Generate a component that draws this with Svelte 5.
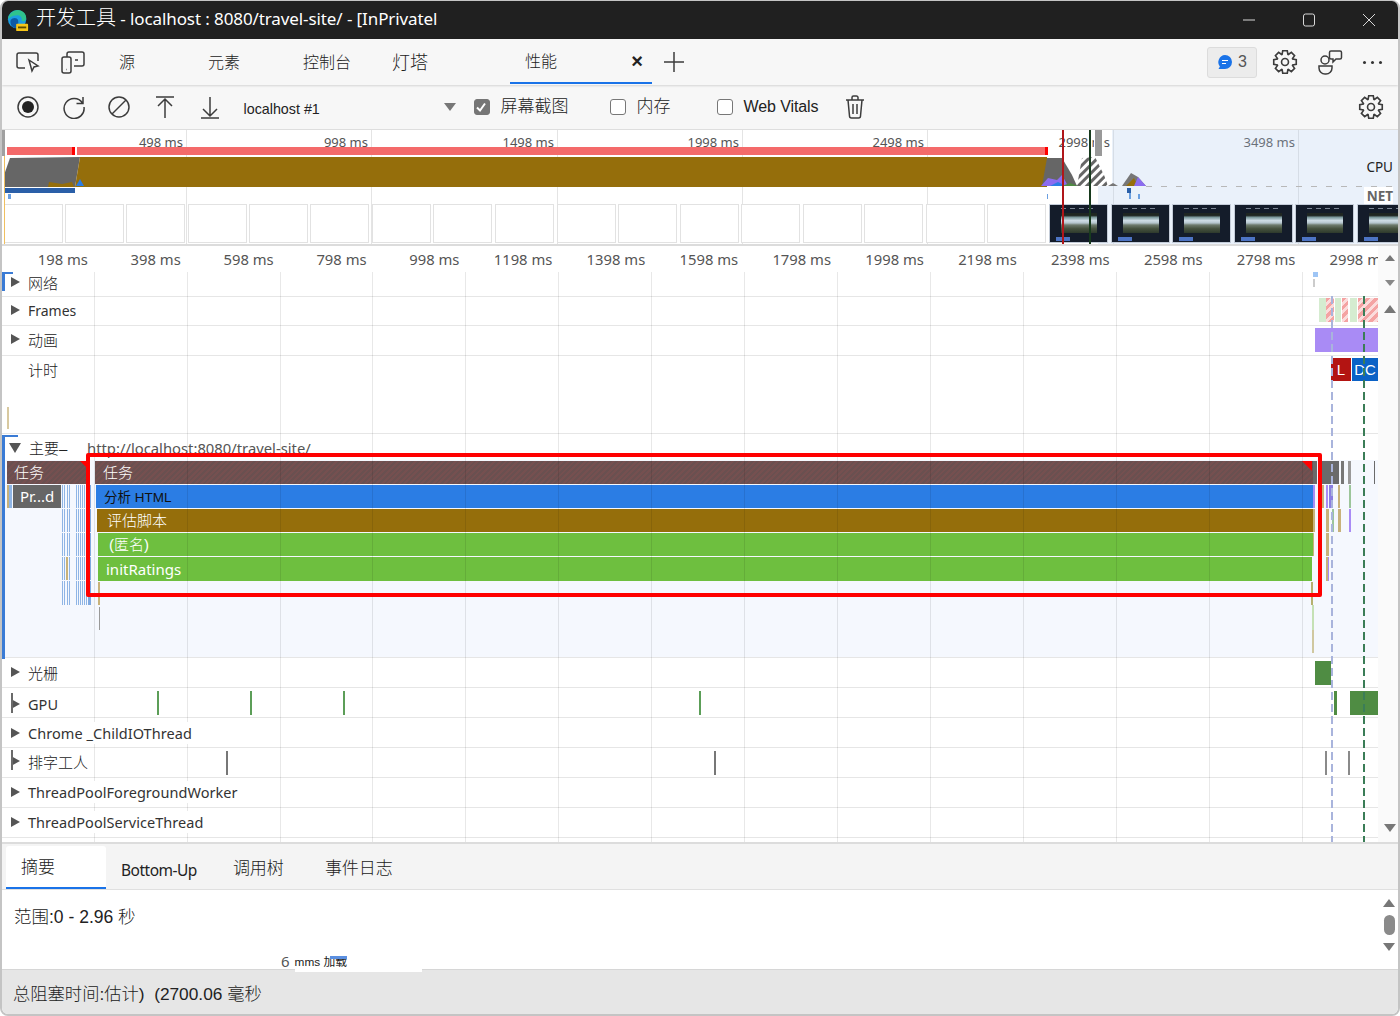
<script>
  // timeline is a free canvas, so events are plain data in page x and row-local y
  const X0 = 2
  const gridLines = [94, 187, 280, 372, 465, 558, 651, 744, 837, 930, 1023, 1116, 1209, 1302]
  const rulerLabels = ['198 ms', '398 ms', '598 ms', '798 ms', '998 ms', '1198 ms', '1398 ms', '1598 ms', '1798 ms', '1998 ms', '2198 ms', '2398 ms', '2598 ms', '2798 ms', '2998 ms']
  const overviewTicks = [
    ['498 ms', 186], ['998 ms', 371], ['1498 ms', 557], ['1998 ms', 742],
    ['2498 ms', 927], ['2998 ms', 1113], ['3498 ms', 1298]
  ]
  const blankFrames = [4, 65, 126, 188, 249, 310, 372, 433, 495, 557, 618, 680, 741, 803, 864, 926, 987]
  const shotFrames = [1049, 1111, 1172, 1234, 1295, 1357]

  const TAN = '#c8b27a'
  const PURPLE = '#a98bf5'
  const GREY = '#6a6a6a'
  const STRIPE = '#8fb5e5'

  const rows = [
    { key: 'net', label: '网络', arrow: true, h: 24, ly: -1, events: [
      { x: 1313, w: 5, y: 0, h: 5, c: '#9ec5f5' },
      { x: 1313, w: 2, y: 7, h: 8, c: '#cccccc' }
    ] },
    { key: 'frames', label: 'Frames', arrow: true, latin: true, h: 29, ly: 3, events: [
      { x: 1319, w: 7, y: 2, h: 24, c: '#d5ecd0' },
      { x: 1326, w: 8, y: 2, h: 24, hatch: true },
      { x: 1335, w: 6, y: 2, h: 24, c: '#d5ecd0' },
      { x: 1342, w: 6, y: 2, h: 24, hatch: true },
      { x: 1350, w: 7, y: 2, h: 24, c: '#d5ecd0' },
      { x: 1358, w: 20, y: 2, h: 24, hatch: true }
    ] },
    { key: 'anim', label: '动画', arrow: true, h: 30, ly: 3, events: [
      { x: 1315, w: 63, y: 3, h: 24, c: PURPLE }
    ] },
    { key: 'timing', label: '计时', h: 78, ly: 3, events: [
      { x: 1331, w: 20, y: 3, h: 23, c: '#b31412', text: 'L' },
      { x: 1352, w: 26, y: 3, h: 23, c: '#0b62c6', text: 'DC' },
      { x: 7, w: 2, y: 52, h: 22, c: '#d8c9a0' }
    ] }
  ]

  const lowerRows = [
    { label: '光栅', arrow: true, ly: 4, events: [{ x: 1315, w: 16, y: 4, h: 24, c: '#4f8c43' }] },
    { label: 'GPU', arrow: true, latin: true, mark: true, ly: 6, events: [
      { x: 157, w: 2, y: 4, h: 24, c: '#5c9e58' }, { x: 250, w: 2, y: 4, h: 24, c: '#5c9e58' },
      { x: 343, w: 2, y: 4, h: 24, c: '#5c9e58' }, { x: 699, w: 2, y: 4, h: 24, c: '#5c9e58' },
      { x: 1334, w: 3, y: 4, h: 24, c: '#4f8c43' }, { x: 1350, w: 28, y: 4, h: 24, c: '#4f8c43' }
    ] },
    { label: 'Chrome _ChildIOThread', arrow: true, latin: true, ly: 5, events: [] },
    { label: '排字工人', arrow: true, mark: true, ly: 3, events: [
      { x: 226, w: 2, y: 4, h: 24, c: '#777777' }, { x: 714, w: 2, y: 4, h: 24, c: '#777777' },
      { x: 1325, w: 2, y: 4, h: 24, c: '#8a8a8a' }, { x: 1348, w: 2, y: 4, h: 24, c: '#8a8a8a' }
    ] },
    { label: 'ThreadPoolForegroundWorker', arrow: true, latin: true, ly: 4, events: [] },
    { label: 'ThreadPoolServiceThread', arrow: true, latin: true, ly: 4, events: [] }
  ]

  // flame chart, y relative to the top of the main track (433)
  const flame = [
    { x: 7, w: 79, y: 28, h: 23, task: true, text: '任务', pad: 7 },
    { x: 95, w: 1218, y: 28, h: 23, task: true, text: '任务', pad: 8 },
    { x: 96, w: 1217, y: 52, h: 23, c: '#2b7de4', text: '分析 HTML', dark: true, pad: 8 },
    { x: 97, w: 1216, y: 76, h: 23, c: '#956e0b', text: '评估脚本', pad: 10 },
    { x: 98, w: 1215, y: 100, h: 23, c: '#6ebf3f', text: '(匿名)', pad: 11 },
    { x: 98, w: 1214, y: 124, h: 24, c: '#6ebf3f', text: 'initRatings', pad: 8, latin: true },
    { x: 13, w: 48, y: 52, h: 23, c: '#666666', text: 'Pr...d', pad: 7, latin: true },
    { x: 7, w: 2, y: 52, h: 23, c: TAN },
    { x: 9, w: 3, y: 52, h: 23, c: STRIPE },
    { x: 98, w: 2, y: 149, h: 23, c: TAN },
    { x: 99, w: 1, y: 174, h: 23, c: '#999999' },
    { x: 1313, w: 4, y: 28, h: 23, c: GREY },
    { x: 1322, w: 17, y: 28, h: 23, c: GREY },
    { x: 1341, w: 3, y: 28, h: 23, c: '#777777' },
    { x: 1348, w: 3, y: 28, h: 23, c: '#999999' },
    { x: 1374, w: 1, y: 28, h: 23, c: GREY },
    { x: 1313, w: 2, y: 52, h: 23, c: PURPLE },
    { x: 1322, w: 2, y: 52, h: 23, c: TAN },
    { x: 1326, w: 2, y: 52, h: 23, c: PURPLE },
    { x: 1329, w: 4, y: 52, h: 23, c: '#8b7fe0' },
    { x: 1338, w: 2, y: 52, h: 23, c: TAN },
    { x: 1349, w: 2, y: 52, h: 23, c: '#9cc59a' },
    { x: 1313, w: 2, y: 76, h: 23, c: TAN },
    { x: 1326, w: 3, y: 76, h: 23, c: TAN },
    { x: 1332, w: 2, y: 76, h: 23, c: '#9cc59a' },
    { x: 1338, w: 3, y: 76, h: 23, c: TAN },
    { x: 1349, w: 2, y: 76, h: 23, c: PURPLE },
    { x: 1313, w: 1, y: 100, h: 23, c: TAN },
    { x: 1326, w: 3, y: 100, h: 23, c: TAN },
    { x: 1326, w: 2, y: 124, h: 24, c: TAN },
    { x: 1328, w: 1, y: 124, h: 24, c: PURPLE },
    { x: 1311, w: 2, y: 149, h: 23, c: '#b6b070' },
    { x: 1312, w: 2, y: 172, h: 25, c: '#c5e1b5' },
    { x: 1312, w: 2, y: 197, h: 23, c: '#d0c8a0' }
  ]
  // thin blue columns left of the long task
  const stripeX = [62, 64, 67, 69, 76, 78, 80, 82, 84, 86, 88]
  for (const y of [52, 76, 100, 124, 148]) {
    for (const x of stripeX) {
      flame.push({ x, w: 1, y, h: y === 148 ? 24 : 23, c: x === 88 ? '#5f93d8' : STRIPE })
    }
    flame.push({ x: 88, w: 3, y, h: y === 148 ? 24 : 23, c: '#7fa9e0' })
  }
  flame.push({ x: 66, w: 2, y: 124, h: 23, c: TAN })

  const tasksRight = [80, 1302]

  // 8 tooth cog centred on 12,12, drawn as one closed outline
  function cog() {
    const pts = []
    for (let i = 0; i < 8; i++) {
      const a = (i * Math.PI) / 4
      for (const [r, off] of [[7.6, -0.36], [10.6, -0.2], [10.6, 0.2], [7.6, 0.36]]) {
        pts.push((12 + r * Math.sin(a + off)).toFixed(2) + ' ' + (12 - r * Math.cos(a + off)).toFixed(2))
      }
    }
    return 'M' + pts.join('L') + 'Z'
  }
  const cogPath = cog()
</script>

{#snippet gear()}
  <svg viewBox="0 0 24 24" width="26" height="26" class="ico">
    <path d={cogPath} />
    <circle cx="12" cy="12" r="3.2" />
  </svg>
{/snippet}

{#snippet eventBar(e)}
  <div
    class="ev"
    class:hatch={e.hatch}
    style="left:{e.x - X0}px;top:{e.y}px;width:{e.w}px;height:{e.h}px;background-color:{e.c}"
  >
    {#if e.text}<span>{e.text}</span>{/if}
  </div>
{/snippet}

<div class="win">
  <header class="title">
    <svg class="edge" viewBox="0 0 24 24" width="22" height="22">
      <circle cx="11" cy="10" r="10" fill="#1b9de2" />
      <path d="M1 10C2 3 8 0 12 0c5 0 9 4 9 9 0 3-3 4-5 3 1-4-2-7-6-6-4 0-7 2-9 4z" fill="#2fc28e" />
      <path d="M4 11c2-3 7-3 8 0 1 4 0 7-3 9-4-1-6-5-5-9z" fill="#0c59a4" />
      <rect x="10" y="15" width="13" height="8" rx="1" fill="#f5c518" />
      <rect x="12" y="18" width="9" height="2" fill="#5a4a00" />
    </svg>
    <span class="title-text"><span class="cjk-title">开发工具</span> - localhost : 8080/travel-site/ - [InPrivatel</span>
    <div class="win-btns">
      <svg viewBox="0 0 14 14" width="14" height="14"><path d="M1 7h12" /></svg>
      <svg viewBox="0 0 14 14" width="14" height="14"><rect x="1.5" y="1" width="11" height="12" rx="2" /></svg>
      <svg viewBox="0 0 14 14" width="14" height="14"><path d="M1 1l12 12M13 1L1 13" /></svg>
    </div>
  </header>

  <nav class="tabs">
    <svg class="ico tab-ico" viewBox="0 0 26 24" width="26" height="24">
      <path d="M10 18H4a2 2 0 0 1-2-2V5a2 2 0 0 1 2-2h17a2 2 0 0 1 2 2v6" />
      <path d="M14 10l9 6-4 1-2 4z" />
    </svg>
    <svg class="ico tab-ico two" viewBox="0 0 26 24" width="26" height="24">
      <rect x="2" y="7" width="9" height="16" rx="2" />
      <path d="M7 7V4a2 2 0 0 1 2-2h13a2 2 0 0 1 2 2v10a2 2 0 0 1-2 2h-8M6 19.500h.5M15 10h3" />
    </svg>
    <span class="tab t-src">源</span>
    <span class="tab t-el">元素</span>
    <span class="tab t-con">控制台</span>
    <span class="tab t-lh">灯塔</span>
    <div class="tab-active">
      <span class="tab">性能</span>
      <span class="close">×</span>
    </div>
    <svg class="ico plus" viewBox="0 0 24 24" width="24" height="24"><path d="M12 2v20M2 12h20" /></svg>
    <div class="spacer"></div>
    <div class="badge">
      <svg viewBox="0 0 16 16" width="16" height="16">
        <path d="M8 1a7 7 0 0 1 0 14H1.500l1.400-2.600A7 7 0 0 1 8 1z" fill="#1a73e8" />
        <path d="M5 6.500h6M5 9.500h4" stroke="#fff" stroke-width="1" />
      </svg>
      <span>3</span>
    </div>
    <div class="tab-gear">{@render gear()}</div>
    <svg class="ico feedback" viewBox="0 0 26 26" width="26" height="26">
      <circle cx="8" cy="11" r="4" />
      <path d="M2 17h13v2a6 6 0 0 1-6 6H8a6 6 0 0 1-6-6z" />
      <path d="M14 2h9a1.500 1.500 0 0 1 1.500 1.500v5A1.500 1.500 0 0 1 23 10h-4l-3 3v-3h-2a1.500 1.500 0 0 1-1.500-1.500v-5A1.500 1.500 0 0 1 14 2z" />
    </svg>
    <div class="dots"><i></i><i></i><i></i></div>
  </nav>

  <div class="toolbar">
    <svg class="ico tool" viewBox="0 0 24 24" width="24" height="24">
      <circle cx="12" cy="12" r="10" />
      <circle cx="12" cy="12" r="6" class="solid" />
    </svg>
    <svg class="ico tool" viewBox="0 0 24 24" width="24" height="24">
      <path d="M21 2v6.500h-6.500M20.500 8A10 10 0 1 0 22 12" />
    </svg>
    <svg class="ico tool" viewBox="0 0 24 24" width="24" height="24">
      <circle cx="12" cy="12" r="10" />
      <path d="M5 19L19 5" />
    </svg>
    <svg class="ico tool" viewBox="0 0 24 24" width="24" height="24">
      <path d="M3 2h18M12 23V4M5 11l7-7 7 7" />
    </svg>
    <svg class="ico tool" viewBox="0 0 24 24" width="24" height="24">
      <path d="M3 23h18M12 2v19M5 14l7 7 7-7" />
    </svg>
    <span class="target">localhost #1</span>
    <i class="caret"></i>
    <label class="chk shots">
      <span class="box on">
        <svg viewBox="0 0 16 16" width="16" height="16"><path d="M4 8.500l3 3 5-7" /></svg>
      </span>
      <span class="cjk">屏幕截图</span>
    </label>
    <label class="chk mem"><span class="box"></span><span class="cjk">内存</span></label>
    <label class="chk vitals"><span class="box"></span><span class="vital-text">Web Vitals</span></label>
    <svg class="ico trash" viewBox="0 0 22 26" width="22" height="26">
      <path d="M2 6h18M8 6V3.500A1.500 1.500 0 0 1 9.500 2h3A1.500 1.500 0 0 1 14 3.500V6M4 6l1.500 16A2 2 0 0 0 7.500 24h7a2 2 0 0 0 2-2L18 6M9 10v10M13 10v10" />
    </svg>
    <div class="spacer"></div>
    <div class="tool-gear">{@render gear()}</div>
  </div>

  <section class="overview">
    {#each overviewTicks as [text, x]}
      <div class="ov-line" style="left:{x - X0}px"></div>
      <div class="ov-tick" style="right:{1396 - x + 3 + X0}px">{text}</div>
    {/each}
    <div class="sel-top"></div>
    <div class="sel-low"></div>

    <div class="long-bar"></div>
    <div class="long-mark"></div>
    <div class="long-end"></div>

    <svg class="cpu" viewBox="0 0 1396 62" width="1396" height="62">
      <defs>
        <pattern id="hatch" width="6" height="6" patternUnits="userSpaceOnUse" patternTransform="rotate(45)">
          <rect width="6" height="6" fill="#fff" />
          <rect width="3" height="6" fill="#666" />
        </pattern>
      </defs>
      <path d="M2 30L2 18L8 1L78 0L75 18L73 30Z" fill="#666" />
      <path d="M46 30L47 25L60 27L70 25L72 30Z" fill="#956e0b" />
      <path d="M73 30L75 18L78 0H1045V30Z" fill="#956e0b" />
      <path d="M74 29L78 22L82 29Z" fill="#2b7de4" />
      <path d="M1045 1L1060 1L1070 18L1075 29H1040Z" fill="#666" />
      <path d="M1039 29L1046 21L1055 23L1060 18L1066 29Z" fill="#8b6cf0" />
      <path d="M1048 29L1056 25L1064 29Z" fill="#2b7de4" />
      <path d="M1060 29L1068 26L1076 29Z" fill="#4f8c43" />
      <path d="M1075 29L1080 1L1093 0L1102 18L1106 29Z" fill="url(#hatch)" />
      <path d="M1106 29L1111 26L1116 29Z" fill="#777" />
      <path d="M1120 29L1129 16L1136 20L1144 29Z" fill="#777" />
      <path d="M1124 29L1132 21L1136 29Z" fill="#956e0b" />
      <path d="M1132 29L1136 20L1144 29Z" fill="#8b6cf0" />
      <path d="M1144 29.500H1396" stroke="#b8b8b8" stroke-dasharray="6 9" />
    </svg>

    <div class="net n1"></div>
    <div class="net n2"></div>
    <div class="net n3"></div>
    <div class="net n4"></div>
    <div class="net n5"></div>
    <div class="net n6"></div>

    <span class="ov-cpu">CPU</span>
    <span class="ov-net">NET</span>

    {#each blankFrames as x}
      <div class="frame" style="left:{x - X0}px"></div>
    {/each}
    {#each shotFrames as x}
      <div class="frame shot" style="left:{x - X0}px">
        <div class="shot-head"></div>
        <div class="shot-pic"></div>
        <div class="shot-btn"></div>
      </div>
    {/each}

    <div class="ov-side"></div>
    <div class="ov-start"></div>
    <div class="handle"></div>
    <div class="marker red"></div>
    <div class="marker green"></div>
  </section>

  <section class="timeline">
    <div class="ruler">
      {#each rulerLabels as text}<span>{text}</span>{/each}
    </div>

    <div class="tracks">
      {#each rows as row}
        <div class="row" style="height:{row.h}px">
          {#each row.events as e}{@render eventBar(e)}{/each}
          <div class="label" class:latin={row.latin} style="top:{row.ly}px">
            <i class="arrow" class:none={!row.arrow}></i><span>{row.label}</span>
          </div>
        </div>
      {/each}

      <div class="row main">
        <div class="main-bg"></div>
        <div class="main-title">
          <i class="arrow down"></i><span class="main-name">主要–</span>
          <span class="main-url">http://localhost:8080/travel-site/</span>
        </div>
        {#each flame as e}
          <div
            class="ev flame"
            class:task={e.task}
            class:dark={e.dark}
            class:latin={e.latin}
            style="left:{e.x - X0}px;top:{e.y}px;width:{e.w}px;height:{e.h}px;background-color:{e.c};padding-left:{e.pad ?? 0}px"
          >
            {#if e.text}<span>{e.text}</span>{/if}
          </div>
        {/each}
        {#each tasksRight as x}<i class="corner" style="left:{x - X0}px"></i>{/each}
      </div>

      {#each lowerRows as row}
        <div class="row lower">
          {#each row.events as e}{@render eventBar(e)}{/each}
          <div class="label" class:latin={row.latin} class:marked={row.mark} style="top:{row.ly}px">
            <i class="arrow"></i><span>{row.label}</span>
          </div>
        </div>
      {/each}

      {#each gridLines as x}<div class="grid" style="left:{x - X0}px"></div>{/each}
      <div class="dash blue"></div>
      <div class="dash dgreen"></div>
      <div class="bracket net-b"></div>
      <div class="bracket main-b"></div>
      <div class="selection"></div>
    </div>

    <aside class="scroll">
      <i class="tri up grey"></i>
      <i class="tri down light"></i>
      <i class="tri up big"></i>
      <div class="spacer"></div>
      <i class="tri down big"></i>
    </aside>
  </section>

  <div class="btabs">
    <span class="btab on">摘要</span>
    <span class="btab up">Bottom-Up</span>
    <span class="btab calls">调用树</span>
    <span class="btab log">事件日志</span>
  </div>

  <div class="summary">
    <div class="range">范围:0 - 2.96 秒</div>
    <div class="stray"><b>6</b><span class="stray-white">mms 加载<i></i></span></div>
    <aside class="sum-scroll">
      <i class="tri up big"></i>
      <div class="thumb"></div>
      <i class="tri down big"></i>
    </aside>
  </div>

  <footer class="status">总阻塞时间:估计)&nbsp; (2700.06 毫秒</footer>
</div>

<style>
  :global(body) {
    margin: 0;
    background: #fff;
  }

  .win {
    width: 1400px;
    height: 1016px;
    box-sizing: border-box;
    display: flex;
    flex-direction: column;
    overflow: hidden;
    border: 2px solid #c4c4c4;
    border-top-width: 1px;
    border-radius: 8px;
    font-family: "Liberation Sans", "Noto Sans CJK SC", sans-serif;
    color: #222;
  }

  .spacer { flex: 1; }

  .ico {
    fill: none;
    stroke: #3c3c3c;
    stroke-width: 1.5;
    flex: none;
  }
  .ico .solid { fill: #222; stroke: none; }

  /* title bar */
  .title {
    height: 38px;
    flex: none;
    display: flex;
    align-items: center;
    background: #202020;
    color: #fff;
    padding-left: 5px;
  }
  .edge { flex: none; margin-top: 1px; }
  .title-text {
    margin-left: 7px;
    margin-top: -7px;
    font-size: 17px;
    font-family: "Noto Sans", "Noto Sans CJK SC", sans-serif;
    letter-spacing: -0.1px;
    white-space: nowrap;
  }
  .cjk-title { font-size: 20px; font-weight: 300; letter-spacing: 0; }
  .win-btns {
    margin-left: auto;
    display: flex;
    gap: 46px;
    padding-right: 22px;
    margin-top: -1px;
  }
  .win-btns svg { fill: none; stroke: #d8d8d8; stroke-width: 1; }

  /* devtools tabs */
  .tabs {
    height: 46px;
    flex: none;
    box-sizing: border-box;
    display: flex;
    align-items: center;
    background: #f7f7f7;
    box-shadow: 0 1px 2px rgba(0, 0, 0, 0.14);
    position: relative;
    z-index: 2;
  }
  .tab-ico { margin-left: 13px; }
  .tab-ico.two { margin-left: 19px; }
  .tab {
    font-size: 16px;
    font-weight: 300;
    white-space: nowrap;
    margin-top: -2px;
  }
  .t-src { margin-left: 33px; }
  .t-el { margin-left: 73px; }
  .t-con { margin-left: 63px; }
  .t-lh { margin-left: 41px; font-size: 18px; }
  .tab-active {
    margin-left: 82px;
    width: 142px;
    height: 44px;
    box-sizing: border-box;
    display: flex;
    align-items: center;
    padding-left: 15px;
    border-bottom: 2px solid #1a73e8;
    margin-top: 0;
  }
  .close {
    margin-left: auto;
    margin-right: 9px;
    font-size: 20px;
    font-weight: 700;
    color: #222;
    line-height: 1;
  }
  .plus { margin-left: 10px; }
  .badge {
    width: 50px;
    height: 31px;
    box-sizing: border-box;
    display: flex;
    align-items: center;
    gap: 5px;
    padding-left: 9px;
    background: #ececec;
    border: 1px solid #dcdcdc;
    border-radius: 3px;
    font-size: 16px;
    color: #555;
  }
  .tab-gear { margin-left: 15px; display: flex; }
  .feedback { margin-left: 19px; }
  .dots {
    display: flex;
    gap: 5px;
    margin-left: 20px;
    margin-right: 16px;
  }
  .dots i {
    width: 3px;
    height: 3px;
    border-radius: 50%;
    background: #333;
  }

  /* recording toolbar */
  .toolbar {
    height: 45px;
    flex: none;
    display: flex;
    align-items: center;
    background: #f7f7f7;
    border-bottom: 1px solid #dedede;
    box-sizing: border-box;
    padding-left: 14px;
  }
  .tool { margin-right: 21.500px; }
  .target {
    font-size: 14.300px;
    margin-top: 4px;
    width: 200px;
    white-space: nowrap;
  }
  .caret {
    width: 0;
    height: 0;
    border-left: 6px solid transparent;
    border-right: 6px solid transparent;
    border-top: 8px solid #777;
    margin-left: 0;
  }
  .chk {
    display: flex;
    align-items: center;
    gap: 11px;
    font-size: 17px;
    font-weight: 300;
    white-space: nowrap;
  }
  .box {
    width: 16px;
    height: 16px;
    box-sizing: border-box;
    border: 1.500px solid #777;
    border-radius: 3px;
    background: #fff;
    display: block;
    flex: none;
  }
  .box.on { background: #767676; border-color: #767676; position: relative; }
  .box.on svg {
    position: absolute;
    left: -1.500px;
    top: -1.500px;
    fill: none;
    stroke: #fff;
    stroke-width: 2;
  }
  .shots { margin-left: 18px; }
  .cjk { margin-top: -5px; }
  .mem { margin-left: 41px; }
  .vitals { margin-left: 46px; }
  .vital-text { font-size: 16px; font-weight: 400; letter-spacing: -0.1px; }
  .trash { margin-left: 26px; }
  .tool-gear { display: flex; margin-right: 14px; }

  /* overview strip */
  .overview {
    height: 116px;
    flex: none;
    position: relative;
    overflow: hidden;
    background: #fff;
    border-bottom: 2px solid #dcdcdc;
    box-sizing: border-box;
  }
  .ov-line {
    position: absolute;
    top: 0;
    bottom: 0;
    width: 1px;
    background: #e4e4e4;
  }
  .ov-tick {
    position: absolute;
    top: 3px;
    font-size: 13px;
    color: #555;
    font-family: "Noto Sans", sans-serif;
    white-space: nowrap;
  }
  .sel-top {
    position: absolute;
    left: 1110px;
    right: 0;
    top: 0;
    height: 56px;
    background: rgba(170, 198, 235, 0.25);
  }
  .sel-low {
    position: absolute;
    left: 1096px;
    right: 0;
    top: 56px;
    bottom: 0;
    background: rgba(170, 198, 235, 0.25);
  }
  .long-bar {
    position: absolute;
    left: 5px;
    width: 1041px;
    top: 17px;
    height: 8px;
    background: #f46a6a;
  }
  .long-mark {
    position: absolute;
    left: 70px;
    width: 3px;
    top: 17px;
    height: 8px;
    background: #f00;
    border-right: 2px solid #fff;
  }
  .long-end {
    position: absolute;
    left: 1043px;
    width: 3px;
    top: 17px;
    height: 8px;
    background: #f00;
  }
  .cpu {
    position: absolute;
    left: 0;
    top: 27px;
  }
  .net { position: absolute; }
  .n1 { left: 2px; width: 71px; top: 58px; height: 5px; background: #2a5fa8; }
  .n2 { left: 6px; width: 3px; top: 64px; height: 5px; background: #6a9fe0; }
  .n3 { left: 1045px; width: 1px; top: 64px; height: 5px; background: #6a9fe0; }
  .n4 { left: 1125px; width: 4px; top: 58px; height: 5px; background: #2a5fa8; }
  .n5 { left: 1127px; width: 2px; top: 63px; height: 6px; background: #6a9fe0; }
  .n6 { left: 1136px; width: 2px; top: 64px; height: 5px; background: #6a9fe0; }
  .ov-cpu {
    position: absolute;
    right: 5px;
    top: 28px;
    font-size: 13.500px;
    color: #222;
    font-family: "Noto Sans", sans-serif;
  }
  .ov-net {
    position: absolute;
    right: 5px;
    top: 57px;
    padding-left: 3px;
    background: #fff;
    font-size: 13.500px;
    font-weight: 700;
    color: #666;
    font-family: "Noto Sans", sans-serif;
  }
  .frame {
    position: absolute;
    top: 74px;
    width: 59px;
    height: 39px;
    box-sizing: border-box;
    background: #fff;
    border: 1px solid #e2e2e2;
  }
  .frame.shot {
    background: #141c2a;
    border-color: #c4ccd8;
  }
  .shot-head {
    position: absolute;
    left: 11px;
    right: 10px;
    top: 3px;
    height: 1px;
    background: repeating-linear-gradient(90deg, #7c8694 0 5px, transparent 5px 9px);
  }
  .shot-pic {
    position: absolute;
    left: 11px;
    right: 10px;
    top: 8px;
    height: 20px;
    background: linear-gradient(#1f2622 0 12%, #7d9a9e 22%, #cfdde6 38%, #b4c4cc 50%, #6d7a6c 60%, #46523f 78%, #2e3a2c 100%);
  }
  .shot-btn {
    position: absolute;
    left: 6px;
    top: 32px;
    width: 14px;
    height: 4px;
    background: #4d74c4;
  }
  .ov-side {
    position: absolute;
    left: 0;
    top: 0;
    width: 3px;
    height: 26px;
    background: #a0a0a0;
  }
  .ov-start {
    position: absolute;
    left: 2px;
    top: 26px;
    bottom: 0;
    width: 1px;
    background: #f0c060;
  }
  .handle {
    position: absolute;
    left: 1093px;
    top: 0;
    width: 7px;
    height: 26px;
    background: #999;
    box-shadow: 0 0 0 1px #fff;
  }
  .marker {
    position: absolute;
    top: 0;
    bottom: 0;
    width: 2px;
  }
  .marker.red { left: 1060px; background: #b0161a; }
  .marker.green { left: 1087px; background: #173a1d; }

  /* tracks */
  .timeline {
    height: 598px;
    flex: none;
    position: relative;
    display: flex;
    flex-direction: column;
    border-bottom: 2px solid #dcdcdc;
    box-sizing: border-box;
    overflow: hidden;
    background: #fff;
  }
  .ruler {
    height: 26px;
    flex: none;
    display: flex;
    padding-left: 1px;
    padding-right: 20px;
    font-size: 14.800px;
    font-family: "Noto Sans", sans-serif;
    color: #555;
    align-items: center;
    box-sizing: border-box;
  }
  .ruler span {
    flex: none;
    width: 92.900px;
    box-sizing: border-box;
    text-align: right;
    padding-right: 8px;
    white-space: nowrap;
  }
  .ruler span:last-child { width: 77px; padding-right: 0; overflow: hidden; text-align: left; padding-left: 26px; }

  .tracks {
    position: relative;
    flex: 1;
    margin-right: 20px;
    overflow: hidden;
  }
  .row {
    position: relative;
    box-sizing: border-box;
  }
  .row::after {
    content: "";
    position: absolute;
    left: 0;
    right: 0;
    bottom: -1px;
    height: 1px;
    background: #e6e6e6;
    z-index: 1;
  }
  .row.lower { height: 30px; }
  .row.main { height: 224px; }
  .main-bg {
    position: absolute;
    left: 2px;
    right: 0;
    top: 27px;
    bottom: 0;
    background: #f5f8fe;
  }

  .label {
    position: absolute;
    left: 9px;
    top: 0;
    height: 22px;
    display: flex;
    align-items: center;
    gap: 8px;
    z-index: 3;
    font-size: 15px;
    font-weight: 300;
    white-space: nowrap;
    background: #fff;
    padding-right: 3px;
  }
  .label.latin {
    font-family: "Noto Sans", sans-serif;
    font-weight: 400;
    font-size: 14px;
    color: #333;
  }
  .row.lower .label.latin { font-size: 14.500px; letter-spacing: 0.05px; }
  .marked::before {
    content: "";
    position: absolute;
    left: 0;
    top: 0;
    width: 2px;
    height: 20px;
    background: #6a6a6a;
  }
  .arrow {
    width: 0;
    height: 0;
    border-top: 5px solid transparent;
    border-bottom: 5px solid transparent;
    border-left: 9px solid #555;
    flex: none;
  }
  .arrow.none { border-left-color: transparent; }
  .arrow.down {
    border-left: 6px solid transparent;
    border-right: 6px solid transparent;
    border-top: 10px solid #555;
    border-bottom: 0;
  }

  .main-title {
    position: absolute;
    left: 7px;
    top: 4px;
    display: flex;
    align-items: center;
    z-index: 1;
    white-space: nowrap;
    font-size: 15px;
    font-weight: 300;
  }
  .main-name { margin-left: 8px; width: 58px; }
  .main-url {
    font-family: "Noto Sans", sans-serif;
    color: #555;
    font-size: 14.800px;
    font-weight: 400;
  }

  .ev {
    position: absolute;
    box-sizing: border-box;
    color: #fff;
    font-size: 15px;
    overflow: hidden;
    white-space: nowrap;
    display: flex;
    align-items: center;
    justify-content: center;
  }
  .ev.hatch {
    background: repeating-linear-gradient(135deg, #f4a3a3 0 3px, #fbdcdc 3px 6px);
  }
  .ev.flame {
    justify-content: flex-start;
    font-weight: 300;
  }
  .ev.flame span { margin-top: -2px; }
  .ev.flame.task span { margin-top: -3px; }
  .ev.flame.latin span { margin-top: -1px; }
  .ev.flame.latin {
    font-family: "Noto Sans", sans-serif;
    font-weight: 400;
  }
  .ev.flame.dark { color: #111; font-size: 13.500px; font-weight: 400; }
  .ev.task {
    background: repeating-linear-gradient(135deg, #6a5050 0 2px, #755050 2px 4px);
  }
  .corner {
    position: absolute;
    top: 28px;
    width: 0;
    height: 0;
    border-top: 10px solid #f00;
    border-left: 10px solid transparent;
  }

  .grid {
    position: absolute;
    top: 0;
    bottom: 0;
    width: 1px;
    background: rgba(0, 0, 0, 0.09);
    z-index: 2;
    pointer-events: none;
  }
  .dash {
    position: absolute;
    top: 24px;
    bottom: 0;
    width: 2px;
    z-index: 4;
  }
  .dash.blue {
    left: 1329px;
    background: repeating-linear-gradient(#a9b4dc 0 8px, transparent 8px 12px);
  }
  .dash.dgreen {
    left: 1361px;
    background: repeating-linear-gradient(#3b7d57 0 8px, transparent 8px 12px);
  }
  .bracket {
    position: absolute;
    left: 0;
    border-left: 3px solid #3a7bd5;
    border-top: 2px solid #3a7bd5;
    z-index: 4;
  }
  .net-b { top: 0; height: 17px; width: 8px; }
  .main-b { top: 163px; height: 222px; width: 13px; }
  .selection {
    position: absolute;
    left: 84px;
    top: 181px;
    width: 1236px;
    height: 144px;
    box-sizing: border-box;
    border: 4px solid #f00;
    border-radius: 2px;
    z-index: 5;
  }

  .scroll {
    position: absolute;
    right: 0;
    top: 0;
    bottom: 0;
    width: 20px;
    background: #fafafa;
    display: flex;
    flex-direction: column;
    align-items: center;
    padding: 9px 0 10px 3px;
    box-sizing: border-box;
    gap: 14px;
  }
  .tri {
    width: 0;
    height: 0;
    border-left: 5px solid transparent;
    border-right: 5px solid transparent;
    flex: none;
  }
  .tri.up { border-bottom: 6px solid #777; }
  .tri.down { border-top: 6px solid #777; }
  .tri.light { border-top-color: #888; margin-top: 5px; }
  .tri.big { border-left-width: 6px; border-right-width: 6px; }
  .tri.up.big { border-bottom-width: 8px; }
  .scroll .tri.up.big { margin-top: 5px; }
  .tri.down.big { border-top-width: 8px; }

  /* bottom panel */
  .btabs {
    height: 46px;
    flex: none;
    box-sizing: border-box;
    display: flex;
    align-items: center;
    background: #f4f4f4;
    border-bottom: 1px solid #e0e0e0;
    font-size: 17px;
    font-weight: 300;
    position: relative;
  }
  .btab { white-space: nowrap; }
  .btab.on {
    margin-left: 4px;
    width: 100px;
    height: 43px;
    box-sizing: border-box;
    padding: 7px 0 0 15px;
    background: #fff;
    border-bottom: 2px solid #1a73e8;
    align-self: flex-end;
    border-radius: 3px 3px 0 0;
  }
  .btab.up {
    margin-left: 15px;
    margin-top: 6px;
    font-weight: 400;
    font-family: "Noto Sans", sans-serif;
    font-size: 15.500px;
    letter-spacing: -0.5px;
  }
  .btab.calls { margin-left: 36px; }
  .btab.log { margin-left: 41px; }

  .summary {
    flex: 1;
    min-height: 0;
    background: #fff;
    position: relative;
    z-index: 1;
  }
  .range {
    padding: 15px 0 0 12px;
    font-size: 17.500px;
    font-weight: 300;
    line-height: 24px;
  }
  .stray {
    position: absolute;
    left: 279px;
    bottom: -3px;
    display: flex;
    align-items: flex-end;
  }
  .stray b {
    font-weight: 400;
    font-size: 15px;
    color: #555;
    line-height: 15px;
    margin-bottom: 3px;
    font-family: "Noto Sans", sans-serif;
  }
  .stray-white {
    position: relative;
    font-size: 11.800px;
    margin-left: 5px;
    padding-right: 75px;
    padding-bottom: 3px;
    line-height: 14px;
    background: #fff;
  }
  .stray-white i {
    position: absolute;
    left: 35px;
    top: 1px;
    width: 17px;
    height: 3px;
    background: #5b8fe0;
  }
  .sum-scroll {
    position: absolute;
    right: 2px;
    top: 9px;
    bottom: 10px;
    width: 14px;
    display: flex;
    flex-direction: column;
    align-items: center;
    gap: 4px;
  }
  .thumb {
    width: 11px;
    height: 20px;
    border-radius: 6px;
    background: #8a8a8a;
    margin: 4px 0;
  }
  .status {
    height: 45px;
    flex: none;
    box-sizing: border-box;
    display: flex;
    align-items: center;
    padding-left: 11px;
    background: #e6e6e6;
    border-top: 1px solid #d6d6d6;
    font-size: 17.300px;
    font-weight: 300;
    padding-top: 1px;
  }
</style>
